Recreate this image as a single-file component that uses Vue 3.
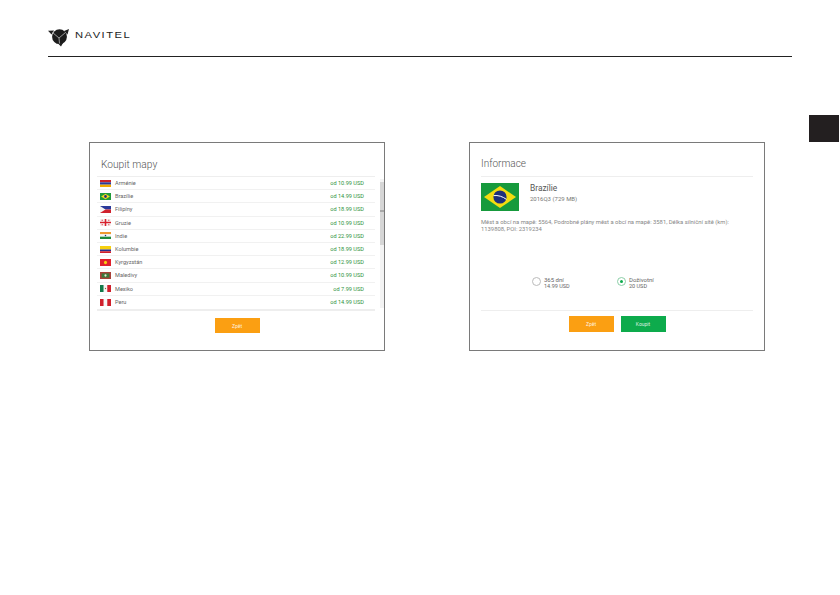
<script setup>
const rows = [
  { name: 'Arménie', price: 'od 10.99 USD', flag: 'am' },
  { name: 'Brazílie', price: 'od 14.99 USD', flag: 'br' },
  { name: 'Filipíny', price: 'od 18.99 USD', flag: 'ph' },
  { name: 'Gruzie', price: 'od 10.99 USD', flag: 'ge' },
  { name: 'Indie', price: 'od 22.99 USD', flag: 'in' },
  { name: 'Kolumbie', price: 'od 18.99 USD', flag: 'co' },
  { name: 'Kyrgyzstán', price: 'od 12.99 USD', flag: 'kg' },
  { name: 'Maledivy', price: 'od 10.99 USD', flag: 'mv' },
  { name: 'Mexiko', price: 'od 7.99 USD', flag: 'mx' },
  { name: 'Peru', price: 'od 14.99 USD', flag: 'pe' },
]
</script>

<template>
  <div class="page">
    <header class="head">
      <svg class="logo" width="22" height="22" viewBox="0 0 22 22">
        <path d="M0 4.7 6 4.5 3.5 8.5Z M21 3 19.5 8.5 16 5Z M13 20.5 10 17.5 15 17Z" fill="#222" />
        <circle cx="11.5" cy="10.7" r="7.4" fill="#1c1c1c" />
        <path d="M4.5 6.5 11 12 17.5 6.5 M11 12 11.5 17.5" stroke="#fff" stroke-width=".55" fill="none" />
      </svg>
      <span class="brand">NAVITEL</span>
    </header>
    <div class="rule"></div>
    <div class="tab"></div>
    <main class="shots">
      <section class="panel">
        <h2 class="title">Koupit mapy</h2>
        <div class="list-wrap">
          <ul class="list">
            <li v-for="r in rows" :key="r.name" class="row">
              <svg class="flag" viewBox="0 0 10 6" preserveAspectRatio="none">
                <template v-if="r.flag === 'am'">
                  <rect width="10" height="2" fill="#c8202c" /><rect y="2" width="10" height="2" fill="#2a3a9a" /><rect y="4" width="10" height="2" fill="#f2a800" />
                </template>
                <template v-else-if="r.flag === 'br'">
                  <rect width="10" height="6" fill="#1f9a3a" /><path d="M5 .7 9 3 5 5.3 1 3Z" fill="#f4d820" /><circle cx="5" cy="3" r="1.2" fill="#26307c" />
                </template>
                <template v-else-if="r.flag === 'ph'">
                  <rect width="10" height="3" fill="#2a3a9a" /><rect y="3" width="10" height="3" fill="#d0202c" /><path d="M0 0 5 3 0 6Z" fill="#f4f4f4" />
                </template>
                <template v-else-if="r.flag === 'ge'">
                  <rect width="10" height="6" fill="#f6f0f0" /><rect x="4.3" width="1.4" height="6" fill="#d8202c" /><rect y="2.4" width="10" height="1.2" fill="#d8202c" /><path d="M1.5 .6h1v.8h-1zM7.5 .6h1v.8h-1zM1.5 4.6h1v.8h-1zM7.5 4.6h1v.8h-1z" fill="#d8202c" />
                </template>
                <template v-else-if="r.flag === 'in'">
                  <rect width="10" height="2" fill="#f09a30" /><rect y="2" width="10" height="2" fill="#f6f6f6" /><rect y="4" width="10" height="2" fill="#1f8a3a" /><circle cx="5" cy="3" r=".7" fill="#26307c" />
                </template>
                <template v-else-if="r.flag === 'co'">
                  <rect width="10" height="3" fill="#f6d010" /><rect y="3" width="10" height="1.5" fill="#26308c" /><rect y="4.5" width="10" height="1.5" fill="#d0202c" />
                </template>
                <template v-else-if="r.flag === 'kg'">
                  <rect width="10" height="6" fill="#e0202c" /><circle cx="5" cy="3" r="1.4" fill="#f6d010" />
                </template>
                <template v-else-if="r.flag === 'mv'">
                  <rect width="10" height="6" fill="#a8423a" /><rect x="1.5" y="1.2" width="7" height="3.6" fill="#3c7a3c" /><circle cx="5" cy="3" r="1" fill="#e8e8d8" />
                </template>
                <template v-else-if="r.flag === 'mx'">
                  <rect width="3.4" height="6" fill="#127a4a" /><rect x="3.4" width="3.2" height="6" fill="#f6f6f6" /><rect x="6.6" width="3.4" height="6" fill="#d0202c" /><circle cx="5" cy="3" r=".6" fill="#8a6a30" />
                </template>
                <template v-else>
                  <rect width="3.4" height="6" fill="#d0202c" /><rect x="3.4" width="3.2" height="6" fill="#f6f6f6" /><rect x="6.6" width="3.4" height="6" fill="#d0202c" />
                </template>
              </svg>
              <span class="name">{{ r.name }}</span>
              <span class="price">{{ r.price }}</span>
            </li>
          </ul>
          <div class="scroll">
            <div class="thumb"></div>
          </div>
        </div>
        <div class="actions one">
          <button class="btn orange">Zpět</button>
        </div>
      </section>

      <section class="panel info">
        <h2 class="title t2">Informace</h2>
        <div class="top">
          <svg class="bigflag" viewBox="0 0 38 28">
            <rect width="38" height="28" fill="#169a3c" />
            <path d="M19 3 35 14 19 25 3 14Z" fill="#f2dc10" />
            <circle cx="19" cy="14" r="6.6" fill="#1e2f7c" />
            <path d="M12.6 12.6 C17 12 22 13.6 25.4 16.4" stroke="#fff" stroke-width="1" fill="none" />
          </svg>
          <div>
            <div class="country">Brazílie</div>
            <div class="ver">2016Q3 (729 MB)</div>
          </div>
        </div>
        <p class="desc">Měst a obcí na mapě: 5564, Podrobné plány měst a obcí na mapě: 3581, Délka silniční sítě (km): 1139808, POI: 2319234</p>
        <div class="radios">
          <div class="radio">
            <span class="dot"></span>
            <div><div class="r1">365 dní</div><div class="r2">14.99 USD</div></div>
          </div>
          <div class="radio">
            <span class="dot on"></span>
            <div><div class="r1">Doživotní</div><div class="r2">20 USD</div></div>
          </div>
        </div>
        <div class="actions two">
          <button class="btn orange">Zpět</button>
          <button class="btn green">Koupit</button>
        </div>
      </section>
    </main>
  </div>
</template>

<style>
html, body { margin: 0; background: #fff; }
</style>

<style scoped>
.page {
  position: relative;
  width: 840px;
  height: 595px;
  overflow: hidden;
  background: #fff;
  font-family: Roboto, "Liberation Sans", sans-serif;
  color: #555;
}
.head {
  display: flex;
  align-items: center;
  height: 22px;
  padding: 26px 0 0 48px;
}
.logo { flex: none; }
.brand {
  margin: 0 0 4px 5px;
  font: 9px "Liberation Sans", sans-serif;
  letter-spacing: 1.2px;
  color: #222;
  transform: scaleX(1.24);
  transform-origin: left center;
}
.rule {
  height: 1px;
  margin: 8px 48px 0;
  background: #222;
}
.tab {
  position: absolute;
  right: 1px;
  top: 115px;
  width: 30px;
  height: 27px;
  background: #231f20;
}
.shots {
  display: flex;
  gap: 84px;
  padding: 85px 0 0 89px;
}
.panel {
  box-sizing: border-box;
  width: 296px;
  height: 209px;
  border: 1px solid #7a7a7a;
  padding: 0 0 0 7px;
}
.title {
  margin: 0;
  height: 33px;
  padding: 15px 0 0 4px;
  box-sizing: border-box;
  font-size: 10.2px;
  line-height: 13px;
  font-weight: 300;
  color: #555;
}
.list-wrap { display: flex; align-items: stretch; height: 135px; }
.list {
  list-style: none;
  margin: 0;
  padding: 0;
  flex: none;
  width: 278px;
  border-top: 1px solid #eee;
  border-bottom: 2px solid #eee;
  box-sizing: border-box;
}
.row {
  display: flex;
  align-items: center;
  box-sizing: border-box;
  height: 13.2px;
  padding: 0 11px 0 3px;
  border-bottom: 1px solid #f1f1f1;
  font-size: 5.6px;
}
.row:last-child { border-bottom: 0; }
.flag { width: 11px; height: 7px; flex: none; }
.name { margin-left: 4px; color: #666; }
.price { margin-left: auto; color: #2f933c; }
.scroll {
  flex: none;
  width: 4px;
  height: 129px;
  margin: 3px 0 0 5px;
  background: #f3f3f3;
  padding-top: 3px;
  box-sizing: border-box;
}
.thumb {
  height: 63px;
  background: linear-gradient(#d6d6d6 0 44%, #a8a8a8 44% 47%, #d6d6d6 47%);
}
.actions { display: flex; justify-content: center; gap: 7px; }
.one { padding: 7px 7px 0 0; }
.btn {
  width: 45px;
  height: 15px;
  padding: 0;
  border: 0;
  color: rgba(255, 255, 255, .85);
  font: 5px Roboto, sans-serif;
}
.orange { background: #fb9f12; }
.green { background: #0dab4c; }
.info { padding: 0 11px; }
.t2 {
  height: 34px;
  padding: 14px 0 0;
  font-size: 10px;
  border-bottom: 1px solid #eee;
}
.top { display: flex; align-items: flex-start; gap: 11px; padding-top: 6px; }
.bigflag { width: 38px; height: 28px; flex: none; display: block; }
.country { font-size: 8.4px; line-height: 11px; color: #555; }
.ver { font-size: 6px; line-height: 8px; color: #777; margin-top: 1px; }
.desc {
  margin: 8px 0 0;
  font-size: 5.85px;
  line-height: 7px;
  color: #888;
}
.radios {
  display: flex;
  padding: 43px 0 0 51px;
}
.radio { display: flex; width: 85px; gap: 3px; align-items: flex-start; }
.dot {
  box-sizing: border-box;
  width: 9px;
  height: 9px;
  margin-top: 1px;
  border: 1px solid #bbb;
  border-radius: 50%;
  flex: none;
  display: flex;
  align-items: center;
  justify-content: center;
}
.dot.on { border-color: #8ccfa8; }
.dot.on::after { content: ""; width: 3px; height: 3px; border-radius: 50%; background: #0dab4c; }
.r1 { font-size: 6px; line-height: 7px; color: #666; }
.r2 { font-size: 5.5px; line-height: 7px; color: #666; }
.two {
  margin-top: 20px;
  border-top: 1px solid #eee;
  padding-top: 5px;
}
.two .btn { height: 16px; }
</style>
